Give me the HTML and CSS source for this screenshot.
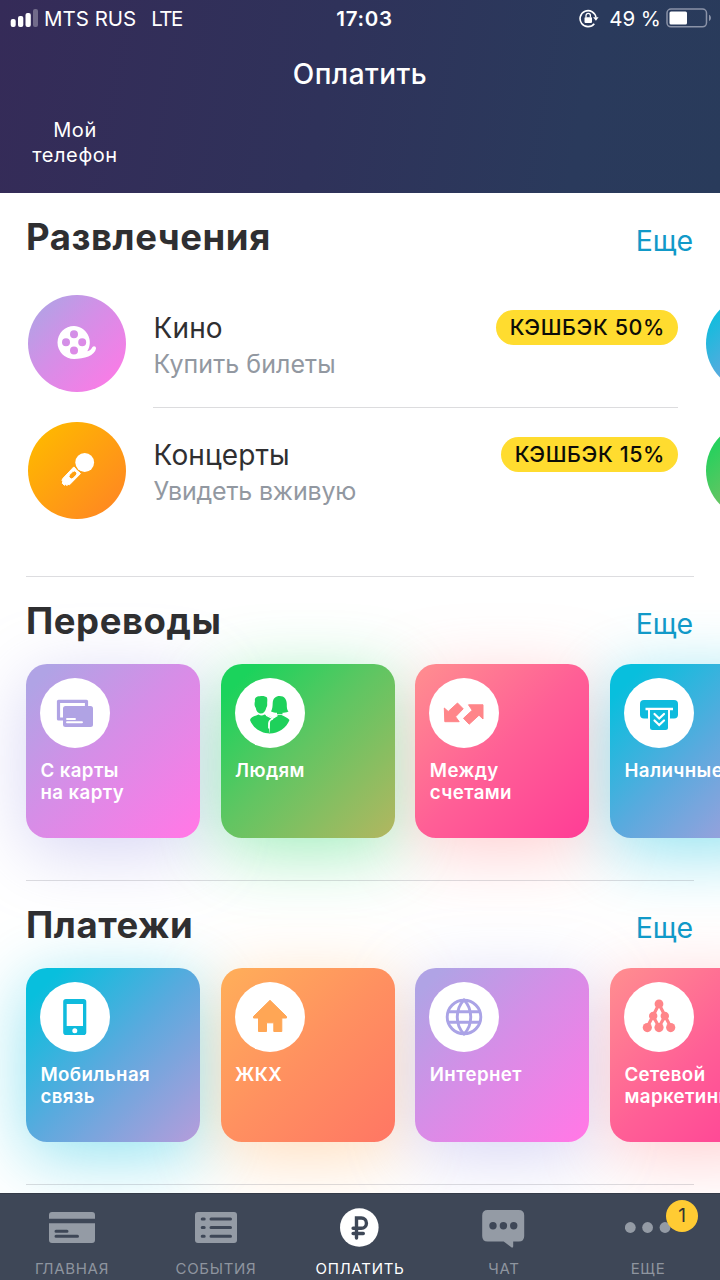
FILE: index.html
```html
<!DOCTYPE html>
<html lang="ru">
<head>
<meta charset="utf-8">
<title>Оплатить</title>
<link rel="stylesheet" href="styles.css">
</head>
<body>
<div class="screen">
  <header class="header">
    <div class="status">
      <div class="status-left">
        <svg class="signal" width="30" height="18" viewBox="0 0 30 18"><g fill="#fff"><rect x=".7" y="10" width="5" height="8" rx="2"/><rect x="8" y="7" width="5.300" height="11" rx="2"/><rect x="15.500" y="4" width="5.300" height="14" rx="2"/><rect x="23" y="0" width="5" height="18" rx="2" opacity=".3"/></g></svg>
        <span class="carrier">MTS RUS</span>
        <span class="network">LTE</span>
      </div>
      <div class="clock">17:03</div>
      <div class="status-right">
        <svg class="lock" width="20" height="19" viewBox="0 0 20 19"><path d="M15.300 14.700A8 8 0 1 1 17 8.500" fill="none" stroke="#fff" stroke-width="1.600"/><path d="M14.100 8.200h5.500l-2.700 3.500z" fill="#fff"/><rect x="5.500" y="8.300" width="7.500" height="5.600" rx=".8" fill="#fff"/><path d="M7 8.500V6.600a2.200 2.200 0 0 1 4.400 0v1.900" fill="none" stroke="#fff" stroke-width="1.300"/></svg>
        <span class="percent">49 %</span>
        <svg class="battery" width="46" height="20" viewBox="0 0 46 20"><rect x="1" y="1" width="39.500" height="17.800" rx="4" fill="none" stroke="#8b93a8" stroke-width="1.500"/><path d="M43 6.800c2.600 1 2.600 5.200 0 6.200z" fill="#8b93a8"/><rect x="3.500" y="3.500" width="17.500" height="13" rx="1.500" fill="#fff"/></svg>
      </div>
    </div>
    <h1 class="title">Оплатить</h1>
    <div class="shortcut">Мой<br>телефон</div>
  </header>

  <main class="content">
    <section class="section section-fun">
      <div class="section-head"><h2>Развлечения</h2><a class="more">Еще</a></div>
      <div class="pages">
        <div class="page">
          <div class="offer">
            <div class="round violet">
              <svg width="40" height="36" viewBox="0 0 40 36"><path fill="#fff" fill-rule="evenodd" d="M17 1A16.500 16.500 0 1 0 17 34C27 34 38 30.500 39 23.500C39.200 21 36.500 20.500 35.500 22C34.500 24.300 32.300 26 30.300 26.200A16.500 16.500 0 0 0 17 1ZM17 5.200a4 4 0 1 1 0 8a4 4 0 1 1 0-8ZM9 13.300a4 4 0 1 1 0 8a4 4 0 1 1 0-8ZM25.200 13.300a4 4 0 1 1 0 8a4 4 0 1 1 0-8ZM17 21.500a4 4 0 1 1 0 8a4 4 0 1 1 0-8Z"/></svg>
            </div>
            <div class="offer-body">
              <div class="offer-text"><b>Кино</b><span>Купить билеты</span></div>
              <div class="cashback">КЭШБЭК 50%</div>
            </div>
          </div>
          <div class="offer">
            <div class="round amber">
              <svg width="36" height="36" viewBox="0 0 36 36"><circle cx="25.700" cy="10.500" r="9.400" fill="#fff"/><path fill="#fff" fill-rule="evenodd" stroke="#fff" stroke-width="1" stroke-linejoin="round" d="M14.800 14.900L21.500 21.600L10.500 32.800L8.800 32.200L8.200 33.500L6.600 32.600L5.300 33.300L3.200 31.200L3.800 29.800L3 28.300L3.800 26.500ZM13.800 19.500L10.500 22.800A2.500 2.500 0 0 0 14 26.300L17.300 23A2.500 2.500 0 0 0 13.800 19.500Z"/><path d="M15.800 12.500A10 10 0 0 0 23.500 20.500" fill="none" stroke="#ffa315" stroke-width="1"/></svg>
            </div>
            <div class="offer-body">
              <div class="offer-text"><b>Концерты</b><span class="tight">Увидеть вживую</span></div>
              <div class="cashback">КЭШБЭК 15%</div>
            </div>
          </div>
        </div>
        <div class="page page-next">
          <div class="offer"><div class="round blue"></div></div>
          <div class="offer"><div class="round green"></div></div>
        </div>
      </div>
    </section>

    <section class="section section-cards">
      <div class="section-head"><h2>Переводы</h2><a class="more">Еще</a></div>
      <div class="cards">
        <div class="card violet">
          <div class="card-icon"><svg width="70" height="70" viewBox="0 0 70 70"><g fill="none" stroke="#b0a3e4" stroke-width="3.200" stroke-linejoin="round"><path d="M23 41H18.500V23.300H46.500V28"/></g><rect x="23" y="28" width="30" height="21" rx="2.500" fill="#b0a3e4"/><path d="M27 41h8M27 44.300h15" stroke="#fff" stroke-width="1.900" stroke-linecap="round"/></svg></div>
          <p>С карты<br>на карту</p>
        </div>
        <div class="card green">
          <div class="card-icon"><svg width="70" height="70" viewBox="0 0 70 70"><g fill="#1ed15b"><path d="M20 23C19 20 22 18 25 18.200C27 17.500 31 18.200 32 19.500C32.700 22 32 24 32.200 26C32.500 28 31.500 29 31.200 30C30.500 33.500 28.500 35.500 26 35.500C23 35.500 21.300 33 20.800 30C19 27.500 19.500 25 20 23Z"/><path d="M37.700 25C38 20 41 18 44.500 18C49.500 18 51.700 21.500 51.800 26C51.700 29.500 52 32 53.500 33.500C51 34.600 49 34.600 47.500 34.800V36.300H42V34.800C40 34.600 38 34.400 36 33.500C37.500 31 37.600 28 37.700 25Z"/><path d="M15 42C15.500 39 20 38 23.500 36.500Q26.500 38.500 29.500 36.500C33 38 37 39 39 41C36 41.800 34 42.500 34 46V52C34 54.500 35 55.500 35 55.500C26 55.500 18 50 15 42Z"/><path d="M54.500 42C53 39.500 49 38.500 46.500 37H42.500C41 39 38 40 36.500 41.300C34.500 43 35.200 46 34.500 55.400C43 55.600 51.500 50 54.500 42Z"/></g><path d="M31 37.200L37.500 40.500L42.500 37.500M38 40.800C34.500 41.800 33.800 43 33.800 45.500V50.500" fill="none" stroke="#fff" stroke-width="1.400"/></svg></div>
          <p>Людям</p>
        </div>
        <div class="card pink">
          <div class="card-icon"><svg width="70" height="70" viewBox="0 0 70 70"><path fill="#ff8589" stroke="#ff8589" stroke-width="1" stroke-linejoin="round" d="M15.300 30L19.200 33.500L28.500 25L34.200 30.800L26.600 38.800L30.200 43.700H15.800ZM39.500 26.800H54V41L50 37.200L40.200 46.200L34.500 40.300L43.200 32.300Z"/></svg></div>
          <p>Между<br>счетами</p>
        </div>
        <div class="card blue">
          <div class="card-icon"><svg width="70" height="70" viewBox="0 0 70 70"><rect x="16" y="22" width="38" height="18.500" rx="4" fill="#0fbbdd"/><path d="M24 32v10h22V32z" fill="#fff"/><path d="M21.500 31H49" stroke="#fff" stroke-width="2.500"/><path d="M26 32H44V49.500Q44 52 41.500 52H28.500Q26 52 26 49.500Z" fill="#0fbbdd"/><path d="M30.500 36l4.700 4.500L40 36M30.500 42.500l4.700 4.500L40 42.500" fill="none" stroke="#fff" stroke-width="2.200" stroke-linecap="round"/></svg></div>
          <p>Наличные</p>
        </div>
      </div>
    </section>

    <section class="section section-cards">
      <div class="section-head"><h2>Платежи</h2><a class="more">Еще</a></div>
      <div class="cards">
        <div class="card blue">
          <div class="card-icon"><svg width="70" height="70" viewBox="0 0 70 70"><path fill="#0fbbdd" fill-rule="evenodd" d="M26 17H43.500Q46.300 17 46.300 19.800V50.200Q46.300 53 43.500 53H26Q23.200 53 23.200 50.200V19.800Q23.200 17 26 17ZM26.700 22V44H43V22ZM34.800 46.300a2.500 2.500 0 1 0 0 5a2.500 2.500 0 1 0 0-5Z"/></svg></div>
          <p>Мобильная<br>связь</p>
        </div>
        <div class="card orange">
          <div class="card-icon"><svg width="70" height="70" viewBox="0 0 70 70"><path fill="#ffa655" stroke="#ffa655" stroke-width="1" stroke-linejoin="round" d="M35 18.300L51.500 34.500V36H46.800V49.500H38.800V40.800H31.500V49.500H23.500V36H18.500V34.500Z"/></svg></div>
          <p>ЖКХ</p>
        </div>
        <div class="card violet">
          <div class="card-icon"><svg width="70" height="70" viewBox="0 0 70 70"><g fill="none" stroke="#aaa3e6" stroke-width="2.900"><circle cx="35" cy="35" r="16.800"/><path d="M35 18C26 27 26 43 35 52C44 43 44 27 35 18ZM19.500 29.700H50.500M19.500 40.300H50.500"/></g></svg></div>
          <p>Интернет</p>
        </div>
        <div class="card pink">
          <div class="card-icon"><svg width="70" height="70" viewBox="0 0 70 70"><g fill="#ff8589"><circle cx="35" cy="21.900" r="4.400"/><circle cx="29.200" cy="34" r="4.200"/><circle cx="40.800" cy="34" r="4.200"/><circle cx="23.300" cy="45.600" r="4.600"/><circle cx="35" cy="45.600" r="4.600"/><circle cx="46.700" cy="45.600" r="4.600"/></g><path d="M35 22L23.300 45M35 22L46.700 45M29 34L35 45L41 34" fill="none" stroke="#ff8589" stroke-width="3.200"/></svg></div>
          <p>Сетевой<br>маркетинг</p>
        </div>
      </div>
    </section>
  </main>

  <nav class="tabs">
    <div class="tab">
      <svg width="46" height="46" viewBox="0 0 46 46"><path fill="#949ba5" d="M0 13.700V10Q0 7 3 7H43Q46 7 46 10V13.700ZM0 18.300H46V35Q46 38 43 38H3Q0 38 0 35Z"/><path d="M7 26.200H18M7 31.300H28.500" stroke="#3e4757" stroke-width="3" stroke-linecap="round"/></svg>
      <span>ГЛАВНАЯ</span>
    </div>
    <div class="tab">
      <svg width="42" height="46" viewBox="0 0 42 46"><rect y="7" width="42" height="31" rx="3" fill="#949ba5"/><path d="M7.200 14h2M7.200 22.500h2M7.200 31.200h2M16 14H35.500M16 22.500H35.500M16 31.200H35.500" stroke="#3e4757" stroke-width="3" stroke-linecap="round"/></svg>
      <span>СОБЫТИЯ</span>
    </div>
    <div class="tab active">
      <svg width="40" height="46" viewBox="0.700 0 40 46"><circle cx="20" cy="22.500" r="19.300" fill="#fff"/><path d="M17.200 33V13H22a5.100 5.100 0 0 1 0 10.300H13.800M13.800 28.500H24" fill="none" stroke="#3e4757" stroke-width="3.400" stroke-linecap="round"/></svg>
      <span>ОПЛАТИТЬ</span>
    </div>
    <div class="tab">
      <svg width="42" height="46" viewBox="0.800 0 42 46" overflow="visible"><path fill="#949ba5" d="M5.500 5H36.500Q42 5 42 10.500V31Q42 36.500 36.500 36.500H31V41.500Q30.500 43.500 28.800 42L21.500 36.500H5.500Q0 36.500 0 31V10.500Q0 5 5.500 5Z"/><g fill="#3e4757"><circle cx="10.800" cy="20.700" r="3.700"/><circle cx="21.200" cy="20.700" r="3.700"/><circle cx="31.500" cy="20.700" r="3.700"/></g></svg>
      <span>ЧАТ</span>
    </div>
    <div class="tab">
      <svg width="46" height="46" viewBox="0.700 0 46 46"><g fill="#949ba5"><circle cx="6" cy="22.500" r="5.400"/><circle cx="23.300" cy="22.500" r="5.400"/><circle cx="40.700" cy="22.500" r="5.400"/></g></svg>
      <span>ЕЩЕ</span>
      <em class="count">1</em>
    </div>
  </nav>
</div>
</body>
</html>
```
FILE: styles.css
```css
* { box-sizing: border-box; margin: 0; padding: 0; }

body {
  width: 720px;
  height: 1280px;
  overflow: hidden;
  background: #fff;
  color: #2f2f31;
  font-family: Inter, "Liberation Sans", sans-serif;
}

svg { display: block; flex: none; }

.screen { display: flex; flex-direction: column; width: 720px; height: 1280px; overflow: hidden; }

.header { flex: none; height: 193px; color: #fff; background: linear-gradient(100deg, #352b58 0%, #2f325a 45%, #2a3a5c 80%, #293b5b 100%); }

.status { display: grid; grid-template-columns: 1fr auto 1fr; align-items: center; height: 36px; padding: 0 8px 0 10px; font-size: 20.5px; white-space: nowrap; }
.status-left { display: flex; align-items: center; }
.signal { margin-top: -1px; }
.carrier { margin-left: 4px; }
.network { margin-left: 15px; letter-spacing: -1.6px; }
.clock { padding-left: 7px; font-weight: 600; letter-spacing: 0.7px; }
.status-right { display: flex; align-items: center; justify-content: flex-end; }
.percent { margin: 0 5px 0 10px; }
.battery { margin: -1px 0 0; }
.lock { margin-left: 3px; }

.title { height: 76px; line-height: 76px; font-size: 28px; font-weight: 500; letter-spacing: 0.45px; text-align: center; }
.shortcut { width: 120px; margin: 6px 0 0 15px; font-size: 20px; line-height: 24.500px; letter-spacing: 0.6px; text-align: center; }

.content { flex: 1; overflow: hidden; isolation: isolate; }
.section-head { display: flex; align-items: flex-start; justify-content: space-between; height: 88px; padding: 0 27px 0 26px; line-height: 88px; }
.section-head h2 { font-size: 36.5px; font-weight: 700; letter-spacing: 0.55px; }
.more { padding-top: 3px; color: #1199c8; font-size: 28.5px; }

.section-fun { height: 383px; }
.section-fun .section-head { line-height: 90px; }
.section-fun .section-head h2 { line-height: 89px; }
.pages { display: flex; padding: 13.500px 0 0 28px; }
.page { flex: none; width: 650px; margin-right: 28px; }
.offer { display: flex; height: 127px; }
.round { display: flex; align-items: center; justify-content: center; flex: none; width: 97.500px; height: 97.500px; border-radius: 50%; }
.offer-body { display: flex; justify-content: space-between; flex: 1; height: 113px; margin-left: 27.500px; }
.offer:first-child .offer-body { border-bottom: 1px solid #dcdcde; }
.offer-text { display: flex; flex-direction: column; padding-left: 0.6px; }
.offer-text b { margin-top: 14px; font-size: 28px; line-height: 38px; font-weight: 400; letter-spacing: 0.1px; }
.offer-text span { color: #9298a1; font-size: 25px; line-height: 35px; letter-spacing: 0.05px; }
.offer-text .tight { letter-spacing: -0.2px; }
.cashback { height: 35px; margin-top: 15px; padding: 0 13px 0 14px; border-radius: 18px; background: #ffdc2f; color: #0c0c08; font-size: 21.5px; font-weight: 500; line-height: 35px; letter-spacing: 0.6px; }

.section-cards { height: 304px; }
.section-cards::before { content: ""; display: block; height: 1px; margin: 0 26px; background: rgba(120, 120, 130, 0.25); }
.section-cards .section-head { height: 87px; }
.cards { display: flex; gap: 20.700px; padding-left: 26px; }
.card { position: relative; flex: none; width: 174px; height: 174px; padding: 14px; border-radius: 21px; color: #fff; }
.card::before { content: ""; position: absolute; z-index: -1; inset: 0; border-radius: 21px; }
.card-icon { width: 70px; height: 70px; border-radius: 50%; background: #fff; }
.card p { margin-top: 11.600px; padding-left: 0.4px; font-size: 18.700px; font-weight: 600; line-height: 22.800px; letter-spacing: 0.4px; white-space: nowrap; }

.violet { background: linear-gradient(135deg, #b0a3e5 8%, #d58ee7 45%, #ff79e6 95%); }
.green { background: linear-gradient(135deg, #1bd35c 10%, #5dc662 45%, #b3b660 100%); }
.pink { background: linear-gradient(135deg, #ff8a90 5%, #ff5f96 50%, #ff4096 95%); }
.blue { background: linear-gradient(135deg, #08bfdd 10%, #5aaade 50%, #b69cdb 100%); }
.orange { background: linear-gradient(135deg, #ffac5a 5%, #ff9060 50%, #ff7664 100%); }
.amber { background: linear-gradient(135deg, #ffb800 10%, #ff8523 95%); }

.card.violet::before { box-shadow: 0 14px 68px rgba(160, 155, 228, 0.42); }
.card.green::before { box-shadow: 0 14px 68px rgba(27, 211, 92, 0.42); }
.card.pink::before { box-shadow: 0 14px 68px rgba(255, 138, 144, 0.42); }
.card.blue::before { box-shadow: 0 14px 68px rgba(8, 191, 221, 0.45); }
.card.orange::before { box-shadow: 0 14px 68px rgba(255, 172, 90, 0.42); }

.content::after { content: ""; display: block; height: 1px; margin: 0 26px; background: rgba(120, 120, 130, 0.25); }

.tabs { display: grid; grid-template-columns: repeat(5, 1fr); flex: none; height: 87px; border-top: 1px solid #343b48; background: #3e4757; }
.tab { position: relative; display: flex; flex-direction: column; align-items: center; padding-top: 11px; color: #8e959f; font-size: 15px; line-height: 20px; letter-spacing: 0.7px; }
.tab span { margin-top: 8px; }
.tab.active { color: #fff; }
.count { position: absolute; top: 6px; right: 22px; width: 32px; height: 32px; border-radius: 50%; background: #ffcb33; color: #333; font-size: 19px; font-style: normal; line-height: 31px; letter-spacing: 0; text-align: center; }
```
